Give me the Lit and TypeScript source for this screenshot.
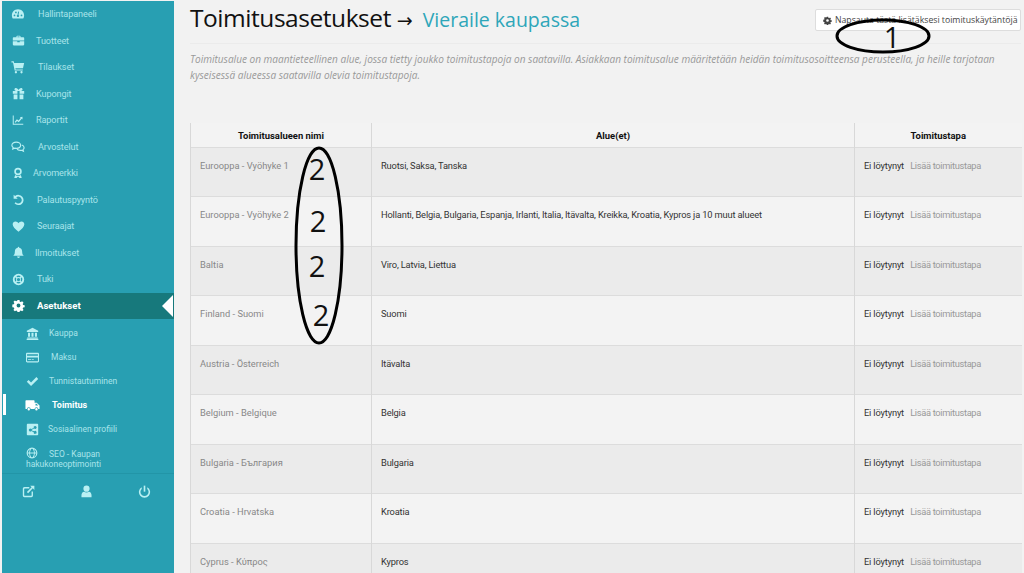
import { LitElement, html, css, svg } from "lit";
import { customElement } from "lit/decorators.js";

const icons: Record<string, any> = {
  dash: svg`<path fill-rule="evenodd" d="M8 2.500C3.800 2.500 1 5.800 1 9.600c0 1.400.4 2.600 1 3.400h12c.6-.8 1-2 1-3.400 0-3.800-2.800-7.100-7-7.100ZM4 8.600a1 1 0 1 1 0 2 1 1 0 0 1 0-2Zm1.600-3.400a1 1 0 1 1 0 2 1 1 0 0 1 0-2Zm3.600.2L8.600 9a1.300 1.300 0 1 1-1.100-.1l.6-3.700Zm2.800 3.200a1 1 0 1 1 0 2 1 1 0 0 1 0-2Z"/>`,
  case: svg`<path fill-rule="evenodd" d="M5.500 4V2.800C5.500 2.300 6 2 6.400 2h3.200c.4 0 .9.3.9.8V4H14c.6 0 1 .4 1 1v3H1V5c0-.6.4-1 1-1h3.500Zm1.200 0h2.600V3.200H6.700V4ZM1 9h5.500v1.200h3V9H15v4c0 .6-.4 1-1 1H2c-.6 0-1-.4-1-1V9Z"/>`,
  cart: svg`<path d="M.5 1.500h2.600l.5 1.800H15l-1.300 6.200H5l.3 1.300h8.200v1.300H4.200L2.300 2.800H.5Z"/><circle cx="5.600" cy="14" r="1.300"/><circle cx="12" cy="14" r="1.300"/>`,
  gift: svg`<path fill-rule="evenodd" d="M1 5h4.200C3.800 4.600 3 3.800 3 3c0-1 .8-1.700 1.700-1.700C6.200 1.300 7.500 2.500 8 4c.5-1.500 1.800-2.700 3.300-2.700.9 0 1.700.7 1.700 1.700 0 .8-.8 1.600-2.200 2H15v3.300H9.300V5H6.700v3.300H1V5Zm1 4.300h4.700V15H2V9.300Zm7.300 0H14V15H9.300V9.300Z"/>`,
  chart: svg`<path d="M1 2h1.300v11H15v1.300H1Z"/><path d="m3.500 10.500 3-3.500 2.300 1.800 2.700-3.600-1-.9 3.500-.6v3.600l-1.100-1-3.900 4.800-2.300-1.800-2 2.300Z"/>`,
  chat: svg`<path fill="none" stroke="currentColor" stroke-width="1.300" d="M6 2.500c-2.800 0-5 1.500-5 3.500 0 1 .6 1.900 1.500 2.500L2 10.300l2.300-1c.5.100 1.100.2 1.700.2 2.800 0 5-1.500 5-3.500S8.800 2.500 6 2.500Z"/><path fill="none" stroke="currentColor" stroke-width="1.300" d="M12.300 5.800c1.600.5 2.700 1.600 2.700 3 0 .9-.5 1.700-1.300 2.200l.5 1.700-2.200-1c-2 .3-4.500-.3-5.300-2"/>`,
  badge: svg`<path fill-rule="evenodd" d="M8 1a5 5 0 1 1 0 10A5 5 0 0 1 8 1Zm0 2.200a2.800 2.800 0 1 0 0 5.600 2.800 2.800 0 0 0 0-5.600Z"/><path d="M4.200 10.800 3 14.500h3l2-2 2 2h3l-1.200-3.700C10.700 11.600 9.400 12 8 12s-2.700-.4-3.800-1.200Z"/>`,
  undo: svg`<path d="M2 2v5h5L5.200 5.200A4.300 4.300 0 1 1 8 13a4.200 4.200 0 0 1-3.400-1.600l-1.500 1.300A6.300 6.300 0 1 0 3.800 3.800Z"/>`,
  heart: svg`<path d="M8 14.500C4 11 .8 8.500.8 5.300.8 3.200 2.400 1.800 4.300 1.800c1.500 0 2.900.9 3.700 2.200.8-1.300 2.200-2.200 3.700-2.200 1.900 0 3.500 1.400 3.500 3.500 0 3.200-3.200 5.700-7.200 9.200Z"/>`,
  bell: svg`<path d="M8 .8c.5 0 .9.400.9.900v.5c2.400.4 3.600 2.300 3.600 4.800 0 2.800.8 4 2 5H1.500c1.200-1 2-2.200 2-5 0-2.500 1.200-4.400 3.600-4.800v-.5c0-.5.400-.9.900-.9ZM6.200 13h3.600a1.800 1.800 0 0 1-3.600 0Z"/>`,
  life: svg`<path fill-rule="evenodd" d="M8 1a7 7 0 1 1 0 14A7 7 0 0 1 8 1Zm-2.700 2.900 1.400 1.400a3 3 0 0 1 2.600 0l1.400-1.400a5 5 0 0 0-5.400 0Zm-1.400 1.400a5 5 0 0 0 0 5.400l1.400-1.400a3 3 0 0 1 0-2.600Zm8.200 0-1.400 1.400a3 3 0 0 1 0 2.600l1.400 1.400a5 5 0 0 0 0-5.400Zm-6.800 6.800a5 5 0 0 0 5.400 0l-1.400-1.400a3 3 0 0 1-2.600 0ZM8 6a2 2 0 1 0 0 4 2 2 0 0 0 0-4Z"/>`,
  cog: svg`<path fill-rule="evenodd" d="M6.700 1h2.600l.4 2 1.300.6 1.700-1.100 1.800 1.800-1.100 1.700.6 1.300 2 .4v2.600l-2 .4-.6 1.300 1.100 1.700-1.800 1.800-1.700-1.100-1.300.6-.4 2H6.700l-.4-2-1.300-.6-1.700 1.100-1.800-1.800 1.100-1.700-.6-1.300-2-.4V6.700l2-.4.6-1.300-1.100-1.700 1.800-1.800L5 2.600l1.300-.6ZM8 5.500a2.500 2.500 0 1 0 0 5 2.500 2.500 0 0 0 0-5Z" transform="translate(.4 .4) scale(.95)"/>`,
  bank: svg`<path d="M8 1 1 4.500V6h14V4.500ZM2.500 7H5v5H2.500Zm4.250 0h2.500v5h-2.500ZM11 7h2.500v5H11ZM1.500 13h13v1.200h-13ZM.8 14.600h14.400V16H.8Z"/>`,
  card: svg`<path fill-rule="evenodd" d="M1.500 2h13c.8 0 1.500.7 1.500 1.500v9c0 .8-.7 1.500-1.500 1.500h-13C.7 14 0 13.300 0 12.500v-9C0 2.700.7 2 1.500 2Zm-.2 2v1.800h13.400V4Zm0 4v4.500h13.400V8ZM2.500 10h4v1.200h-4Zm5 0h2v1.200h-2Z"/>`,
  check: svg`<path d="m1 8.300 2.200-2.200 3 3L12.800 2.600 15 4.800l-8.800 8.800Z"/>`,
  truck: svg`<path fill-rule="evenodd" d="M1.200 2.500h8.300c.4 0 .7.300.7.700V5h2.300l3 3v3.800h-1.300a2 2 0 0 0-4 0H6a2 2 0 0 0-4 0h-.8c-.4 0-.7-.3-.7-.7V3.200c0-.4.300-.7.700-.7Zm10 3.700V8h2.900l-1.800-1.800ZM4 10.600a1.300 1.300 0 1 1 0 2.600 1.300 1.300 0 0 1 0-2.600Zm8.200 0a1.300 1.300 0 1 1 0 2.600 1.300 1.300 0 0 1 0-2.600Z"/>`,
  share: svg`<path fill-rule="evenodd" d="M2 1h12c.6 0 1 .4 1 1v12c0 .6-.4 1-1 1H2c-.6 0-1-.4-1-1V2c0-.6.4-1 1-1Zm9.200 2.800a1.800 1.800 0 0 0-1.700 2.300L6.600 7.400a1.800 1.800 0 1 0 0 2.500l2.900 1.400a1.800 1.800 0 1 0 .5-1L7.100 9.100v-.9L10 6.800a1.800 1.800 0 1 0 1.200-3Z"/>`,
  globe: svg`<path fill-rule="evenodd" d="M8 .8a7.200 7.200 0 1 1 0 14.400A7.200 7.200 0 0 1 8 .800ZM5.400 7.300h5.200C10.500 5 9.500 2.900 8.500 2.200h-1C6.500 2.900 5.500 5 5.400 7.300Zm-3.200 0h2C4.300 5.200 4.900 3.500 5.700 2.500a5.900 5.900 0 0 0-3.500 4.800Zm9.600 0h2a5.900 5.900 0 0 0-3.500-4.800c.8 1 1.400 2.700 1.500 4.800Zm-7.600 1.400h-2a5.900 5.900 0 0 0 3.500 4.800c-.8-1-1.400-2.700-1.500-4.800Zm1.200 0c.1 2.300 1.100 4.400 2.100 5.100h1c1-.7 2-2.800 2.100-5.100Zm6.400 0c-.1 2.100-.7 3.800-1.500 4.800a5.900 5.900 0 0 0 3.500-4.800Z"/>`,
  ext: svg`<path d="M3 2.500h6v1.700H3.500c-.5 0-.8.300-.8.800v7.500c0 .5.300.8.800.8H11c.5 0 .8-.3.800-.8V8h1.700v5c0 1.100-.9 2-2 2H3c-1.100 0-2-.9-2-2V4.500c0-1.100.9-2 2-2Z"/><path d="M10 .8h5.200V6l-1.900-1.900L7.500 10 6 8.500l5.900-5.800Z"/>`,
  user: svg`<circle cx="8" cy="4.500" r="3.800"/><path d="M1.800 15v-2.500c0-2.300 1.500-3.900 3.200-4.200.8.600 1.900 1 3 1s2.200-.4 3-1c1.700.3 3.200 1.900 3.200 4.200V15Z"/>`,
  power: svg`<path d="M7 .8h2v7.400H7Z"/><path d="M4.600 2.700v2.200a5 5 0 1 0 6.800 0V2.700a6.900 6.900 0 1 1-6.800 0Z"/>`,
};

const ico = (n: string, size: number) =>
  html`<svg class="ico" width=${size} height=${size} viewBox="0 0 16 16" fill="currentColor">${icons[n]}</svg>`;

const top = [
  ["dash", "Hallintapaneeli", 38, 14],
  ["case", "Tuotteet", 36, 13],
  ["cart", "Tilaukset", 38, 14],
  ["gift", "Kupongit", 36, 13],
  ["chart", "Raportit", 36, 12],
  ["chat", "Arvostelut", 38, 14],
  ["badge", "Arvomerkki", 33, 12],
  ["undo", "Palautuspyyntö", 37, 13],
  ["heart", "Seuraajat", 37, 13],
  ["bell", "Ilmoitukset", 35, 13],
  ["life", "Tuki", 37, 13],
] as [string, string, number, number][];

const sub = [
  ["bank", "Kauppa", 49, false],
  ["card", "Maksu", 51, false],
  ["check", "Tunnistautuminen", 49, false],
  ["truck", "Toimitus", 52, true],
  ["share", "Sosiaalinen profiili", 48, false],
] as [string, string, number, boolean][];

const rows = [
  ["Eurooppa - Vyöhyke 1", "Ruotsi, Saksa, Tanska"],
  ["Eurooppa - Vyöhyke 2", "Hollanti, Belgia, Bulgaria, Espanja, Irlanti, Italia, Itävalta, Kreikka, Kroatia, Kypros ja 10 muut alueet"],
  ["Baltia", "Viro, Latvia, Liettua"],
  ["Finland - Suomi", "Suomi"],
  ["Austria - Österreich", "Itävalta"],
  ["Belgium - Belgique", "Belgia"],
  ["Bulgaria - България", "Bulgaria"],
  ["Croatia - Hrvatska", "Kroatia"],
  ["Cyprus - Κύπρος", "Kypros"],
];

@customElement("app-root")
export class AppRoot extends LitElement {
  static styles = css`
    :host {
      display: block;
      position: relative;
      width: 1024px;
      height: 573px;
      overflow: hidden;
      background: #f2f2f2;
      font-family: Roboto, "Open Sans", sans-serif;
      color: #333;
    }
    .page { display: flex; height: 573px; }
    .side {
      width: 172px;
      margin: 1px 0 0 2px;
      flex: none;
      background: #289fb2;
      color: #a9e4ea;
      font-size: 9.1px;
      letter-spacing: -0.1px;
      display: flex;
      flex-direction: column;
    }
    .ico { flex: none; color: #b9f0f3; display: block; }
    .item {
      height: 26.5px;
      display: flex;
      align-items: center;
      position: relative;
    }
    .slot { width: 30px; flex: none; display: flex; justify-content: center; margin-left: 1px; }
    .active { background: #17797c; color: #fff; font-weight: 700; font-size: 9.6px; letter-spacing: 0; }
    .active .ico { color: #fff; }
    .active::after {
      content: "";
      position: absolute;
      right: 1px;
      top: 2px;
      border-style: solid;
      border-width: 11px 11px 11px 0;
      border-color: transparent #fff transparent transparent;
    }
    .subs { padding-top: 2px; font-size: 8.5px; letter-spacing: 0; }
    .subitem {
      height: 24px;
      display: flex;
      align-items: center;
      position: relative;
    }
    .subitem .slot { width: 14px; margin-left: 23px; }
    .cur { color: #fff; font-weight: 700; font-size: 9px; }
    .cur .ico { color: #fff; }
    .cur::before {
      content: "";
      position: absolute;
      left: 1px;
      top: 1px;
      width: 3px;
      height: 21px;
      background: #fff;
    }
    .seo { padding: 6px 0 0 24px; line-height: 10px; height: 32px; box-sizing: border-box; }
    .seo .ico { display: inline-block; vertical-align: -2px; margin-right: 11px; }
    .tools {
      border-top: 1px solid #2295a7;
      display: grid;
      grid-template-columns: repeat(3, 58px);
      padding-top: 11px;
    }
    .tools span { display: flex; justify-content: center; transform: translateX(-3px); }
    main { flex: 1; min-width: 0; padding: 0 3px 0 16px; }
    .head {
      height: 44px;
      display: flex;
      justify-content: space-between;
      border-bottom: 1px solid #ebebeb;
      box-sizing: border-box;
    }
    h1 { margin: 0; font-family: "Open Sans", sans-serif; font-size: 24.5px; letter-spacing: -0.45px; font-weight: 400; color: #111; line-height: 36px; white-space: nowrap; }
    h1 .arrow { font-size: 19px; font-family: "DejaVu Sans", sans-serif; letter-spacing: 0; }
    h1 a { color: #2ea6b9; font-size: 19.5px; letter-spacing: 0; margin-left: 4px; }
    .btn {
      margin-top: 9px;
      height: 22px;
      width: 206px;
      box-sizing: border-box;
      padding-left: 7px;
      background: #fff;
      border: 1px solid #ddd;
      border-radius: 2px;
      font-family: "Open Sans", sans-serif;
      font-size: 8.7px;
      color: #444;
      display: flex;
      align-items: center;
      gap: 3px;
      white-space: nowrap;
    }
    .btn .ico { color: #444; }
    .desc {
      margin: 7px 0 0;
      font-family: "Open Sans", sans-serif;
      font-size: 10.05px;
      font-style: italic;
      color: #999;
      line-height: 16px;
      height: 72px;
    }
    table { border-collapse: collapse; table-layout: fixed; width: 831px; font-size: 9.3px; }
    th { height: 24px; padding: 0; font-size: 9.45px; color: #111; font-weight: 700; text-align: center; border-left: 1px solid #d8d8d8; background: #f3f3f3; }
    td {
      height: 49.45px;
      box-sizing: border-box;
      vertical-align: top;
      padding: 12px 10px 0 9px;
      border-left: 1px solid #d8d8d8;
      border-top: 1px solid #dcdcdc;
      color: #333;
      letter-spacing: -0.16px;
      white-space: nowrap;
    }
    tr:nth-child(odd) td { background: #ebebeb; }
    tr:nth-child(even) td { background: #f3f3f3; }
    td.name { color: #888; letter-spacing: 0; }
    td a { color: #999; margin-left: 4px; letter-spacing: -0.33px; }
    .marks { position: absolute; left: 0; top: 0; pointer-events: none; }
    .marks text { font-family: "Open Sans", sans-serif; font-size: 29px; fill: #111; text-anchor: middle; }
  `;

  render() {
    return html`
      <div class="page">
        <nav class="side">
          ${top.map(([i, t, x, s]) => html`<div class="item">${this.slotFor(i, s)}<span style="margin-left:${x - 33}px">${t}</span></div>`)}
          <div class="item active">${this.slotFor("cog", 13)}<span style="margin-left:4px">Asetukset</span></div>
          <div class="subs">
            ${sub.map(([i, t, x, cur]) => html`<div class="subitem ${cur ? "cur" : ""}"><span class="slot">${ico(i, i === "truck" ? 15 : 13)}</span><span style="margin-left:${x - 39}px">${t}</span></div>`)}
            <div class="seo">${ico("globe", 12)}SEO - Kaupan<br />hakukoneoptimointi</div>
          </div>
          <div class="tools">
            <span>${ico("ext", 13)}</span><span>${ico("user", 13)}</span><span>${ico("power", 13)}</span>
          </div>
        </nav>
        <main>
          <div class="head">
            <h1>Toimitusasetukset <span class="arrow">→</span> <a>Vieraile kaupassa</a></h1>
            <div class="btn">${ico("cog", 9)}<span>Napsauta tästä lisätäksesi toimituskäytäntöjä</span></div>
          </div>
          <p class="desc">Toimitusalue on maantieteellinen alue, jossa tietty joukko toimitustapoja on saatavilla. Asiakkaan toimitusalue määritetään heidän toimitusosoitteensa perusteella, ja heille tarjotaan kyseisessä alueessa saatavilla olevia toimitustapoja.</p>
          <table>
            <colgroup><col style="width:181px" /><col style="width:483px" /><col style="width:167px" /></colgroup>
            <thead><tr><th>Toimitusalueen nimi</th><th>Alue(et)</th><th>Toimitustapa</th></tr></thead>
            <tbody>
              ${rows.map((r) => html`<tr><td class="name">${r[0]}</td><td>${r[1]}</td><td>Ei löytynyt <a>Lisää toimitustapa</a></td></tr>`)}
            </tbody>
          </table>
        </main>
      </div>
      <svg class="marks" width="1024" height="573" viewBox="0 0 1024 573">
        <ellipse cx="883" cy="36" rx="46" ry="16" fill="none" stroke="#000" stroke-width="3" />
        <ellipse cx="319" cy="245.500" rx="23" ry="97.500" fill="none" stroke="#000" stroke-width="3" />
        <text x="892" y="48">1</text>
        <text x="317" y="180">2</text>
        <text x="318" y="232">2</text>
        <text x="317" y="277">2</text>
        <text x="321" y="326">2</text>
      </svg>
    `;
  }

  slotFor(i: string, s: number) {
    return html`<span class="slot">${ico(i, s)}</span>`;
  }
}
